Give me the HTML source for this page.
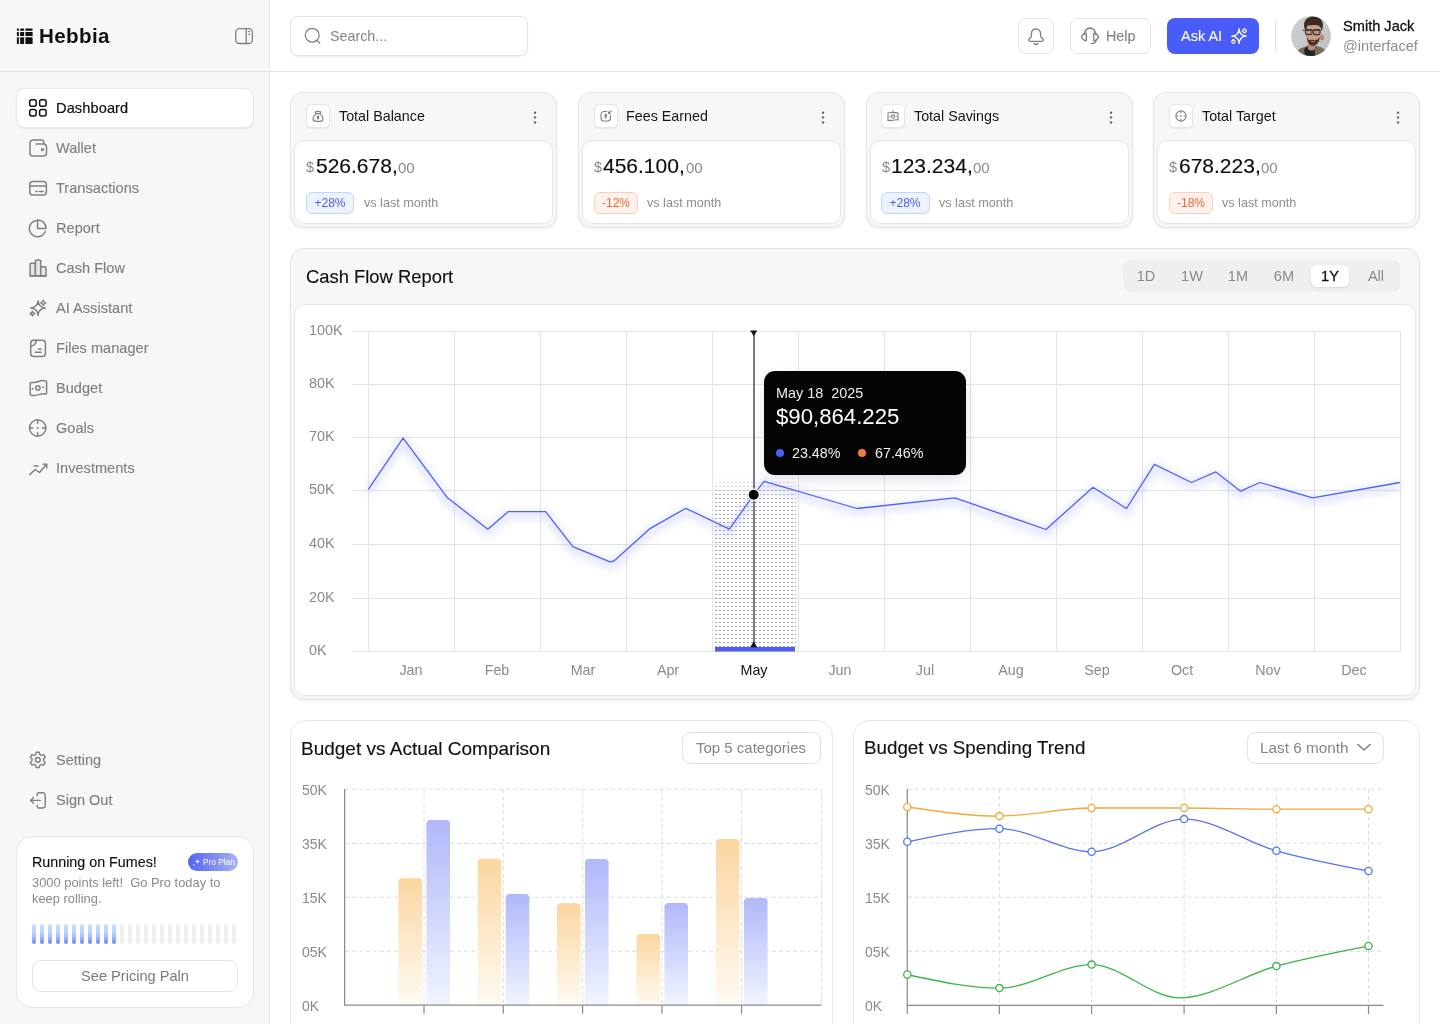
<!DOCTYPE html>
<html><head><meta charset="utf-8"><title>Hebbia Dashboard</title>
<style>
*{margin:0;padding:0;box-sizing:border-box}
html,body{width:1440px;height:1024px;overflow:hidden;background:#fff;font-family:"Liberation Sans",sans-serif}
.t{position:absolute;white-space:pre;will-change:transform}
.b{position:absolute}
svg{position:absolute;overflow:visible}
</style></head>
<body>
<div class="b" style="left:0px;top:0px;width:270px;height:1024px;background:#f7f7f7;border-right:1px solid #e8e8e8;"></div>
<div class="b" style="left:0px;top:71px;width:1440px;height:1px;background:#e6e6e6;"></div>
<svg style="left:0;top:0" width="40" height="50" viewBox="0 0 40 50" fill="#111"><rect x="16.9" y="28.6" width="2.0" height="2.2" rx="0.5"/><rect x="16.9" y="32.1" width="2.0" height="3.8" rx="0.5"/><rect x="16.9" y="37.2" width="2.0" height="6.8" rx="0.5"/><rect x="20.1" y="28.6" width="4.0" height="2.2" rx="0.5"/><rect x="20.1" y="32.1" width="4.0" height="3.8" rx="0.5"/><rect x="20.1" y="37.2" width="4.0" height="6.8" rx="0.5"/><rect x="25.4" y="28.6" width="7.2" height="2.2" rx="0.5"/><rect x="25.4" y="32.1" width="7.2" height="3.8" rx="0.5"/><rect x="25.4" y="37.2" width="7.2" height="6.8" rx="0.5"/></svg>
<div class="t" style="top:26.00px;font-size:20.6px;line-height:20.6px;color:#111;font-weight:700;left:39.00px;letter-spacing:0.35px;">Hebbia</div>
<svg style="left:234px;top:27px" width="20" height="20" viewBox="0 0 20 20" fill="none" stroke="#7f8185" stroke-width="1.3" stroke-linecap="round" stroke-linejoin="round"><rect x="1.7" y="1.6" width="16.7" height="14.9" rx="3.6"/><path d="M12.2 1.6V16.5"/><path d="M14.8 4.5h0.9M14.8 7.4h0.9"/></svg>
<div class="b" style="left:16px;top:88px;width:238px;height:40px;background:#fff;border:1px solid #e9e9ec;border-radius:9px;box-shadow:0 1px 2px rgba(80,90,200,0.10);"></div>
<svg style="left:29px;top:99px" width="18" height="18" viewBox="0 0 18 18" fill="none" stroke="#111" stroke-width="1.5" stroke-linecap="round" stroke-linejoin="round"><rect x="0.7" y="0.7" width="6.5" height="6.5" rx="2"/><rect x="10.6" y="0.7" width="6.5" height="6.5" rx="2"/><rect x="0.7" y="10.6" width="6.5" height="6.5" rx="2"/><rect x="10.6" y="10.6" width="6.5" height="6.5" rx="2"/></svg>
<div class="t" style="top:101.10px;font-size:14.6px;line-height:14.6px;color:#111;font-weight:400;left:55.80px;letter-spacing:0.1px;-webkit-text-stroke:0.2px #111;">Dashboard</div>
<svg style="left:29px;top:139px" width="18" height="18" viewBox="0 0 18 18" fill="none" stroke="#7f8185" stroke-width="1.5" stroke-linecap="round" stroke-linejoin="round"><path d="M7 5H14.5A3 3 0 0 1 17.5 8V14A3 3 0 0 1 14.5 17H4A3 3 0 0 1 1 14V4A3 3 0 0 1 4 1H12.5A2.5 2.5 0 0 1 15 3.5V5"/><circle cx="13.5" cy="10.6" r="0.9"/></svg>
<div class="t" style="top:140.85px;font-size:14.5px;line-height:14.5px;color:#7e8085;font-weight:400;left:55.80px;letter-spacing:0.05px;-webkit-text-stroke:0.15px #7e8085;">Wallet</div>
<svg style="left:29px;top:179px" width="18" height="18" viewBox="0 0 18 18" fill="none" stroke="#7f8185" stroke-width="1.5" stroke-linecap="round" stroke-linejoin="round"><rect x="0.8" y="2.6" width="16.6" height="13.4" rx="3"/><path d="M0.8 7H17.4"/><path d="M6.8 12.6H8.3M10.3 12.6H14.2"/></svg>
<div class="t" style="top:180.85px;font-size:14.5px;line-height:14.5px;color:#7e8085;font-weight:400;left:55.80px;letter-spacing:0.05px;-webkit-text-stroke:0.15px #7e8085;">Transactions</div>
<svg style="left:29px;top:219px" width="18" height="18" viewBox="0 0 18 18" fill="none" stroke="#7f8185" stroke-width="1.5" stroke-linecap="round" stroke-linejoin="round"><path d="M16.2 12.4A8.2 8.2 0 1 1 7.8 1.4"/><path d="M17 9.4A8 8 0 0 0 8.6 1.1V9.4Z"/></svg>
<div class="t" style="top:220.85px;font-size:14.5px;line-height:14.5px;color:#7e8085;font-weight:400;left:55.80px;letter-spacing:0.05px;-webkit-text-stroke:0.15px #7e8085;">Report</div>
<svg style="left:29px;top:259px" width="18" height="18" viewBox="0 0 18 18" fill="none" stroke="#7f8185" stroke-width="1.5" stroke-linecap="round" stroke-linejoin="round"><path d="M1.1 17V5.3A1 1 0 0 1 2.1 4.3H6.4V17Z" fill="#e6e6e6"/><path d="M6.4 17V2.1A1 1 0 0 1 7.4 1.1H10.7A1 1 0 0 1 11.7 2.1V17Z" fill="#e6e6e6"/><path d="M11.7 17V7.7H16A1 1 0 0 1 17 8.7V17Z" fill="#e6e6e6"/><path d="M1.1 17H17"/></svg>
<div class="t" style="top:260.85px;font-size:14.5px;line-height:14.5px;color:#7e8085;font-weight:400;left:55.80px;letter-spacing:0.05px;-webkit-text-stroke:0.15px #7e8085;">Cash Flow</div>
<svg style="left:29px;top:299px" width="18" height="18" viewBox="0 0 18 18" fill="none" stroke="#7f8185" stroke-width="1.5" stroke-linecap="round" stroke-linejoin="round"><path d="M9.07 1.77Q9.65 8.49 16.37 9.07Q9.65 9.65 9.07 16.37Q8.49 9.65 1.77 9.07Q8.49 8.49 9.07 1.77Z" fill="none"/><path d="M14.30 1.20Q14.82 3.28 16.90 3.80Q14.82 4.32 14.30 6.40Q13.78 4.32 11.70 3.80Q13.78 3.28 14.30 1.20Z" stroke-width="1.3" fill="none"/><path d="M3.40 12.10Q3.88 14.02 5.80 14.50Q3.88 14.98 3.40 16.90Q2.92 14.98 1.00 14.50Q2.92 14.02 3.40 12.10Z" stroke-width="1.4" fill="none"/></svg>
<div class="t" style="top:300.85px;font-size:14.5px;line-height:14.5px;color:#7e8085;font-weight:400;left:55.80px;letter-spacing:0.05px;-webkit-text-stroke:0.15px #7e8085;">AI Assistant</div>
<svg style="left:29px;top:339px" width="18" height="18" viewBox="0 0 18 18" fill="none" stroke="#7f8185" stroke-width="1.5" stroke-linecap="round" stroke-linejoin="round"><path d="M7.6 1.2H13.4A3 3 0 0 1 16.4 4.2V14.6A3 3 0 0 1 13.4 17.6H4.7A3 3 0 0 1 1.7 14.6V7.2C4.5 7 6.9 4.6 7.6 1.2Z"/><path d="M1.7 7.2V4.2A3 3 0 0 1 4.7 1.2H7.6"/><path d="M9.3 10.1H12.1M6.1 13.3H12.1"/></svg>
<div class="t" style="top:340.85px;font-size:14.5px;line-height:14.5px;color:#7e8085;font-weight:400;left:55.80px;letter-spacing:0.05px;-webkit-text-stroke:0.15px #7e8085;">Files manager</div>
<svg style="left:29px;top:379px" width="18" height="18" viewBox="0 0 18 18" fill="none" stroke="#7f8185" stroke-width="1.5" stroke-linecap="round" stroke-linejoin="round"><path d="M1.2 4.6C1.2 3.7 1.9 3.3 2.8 3.5C6.5 4.3 9.5 1.8 14 1.6C16.2 1.5 17.6 2.1 17.6 3.3V14C17.6 14.9 16.9 15.3 16 15C12.2 14 9 16.4 4.6 16.6C2.4 16.7 1.2 16.1 1.2 15.1Z"/><circle cx="8.9" cy="8.9" r="2.1"/><path d="M3.6 9.8h0.1M14.2 8.3h0.1" stroke-width="1.9"/></svg>
<div class="t" style="top:380.85px;font-size:14.5px;line-height:14.5px;color:#7e8085;font-weight:400;left:55.80px;letter-spacing:0.05px;-webkit-text-stroke:0.15px #7e8085;">Budget</div>
<svg style="left:29px;top:419px" width="18" height="18" viewBox="0 0 18 18" fill="none" stroke="#7f8185" stroke-width="1.5" stroke-linecap="round" stroke-linejoin="round"><circle cx="8.7" cy="9" r="8.2"/><path d="M8.7 1V4.2M8.7 13.8V17M0.7 9H3.9M13.5 9H16.7"/><path d="M8.7 9h0.05" stroke-width="1.8"/></svg>
<div class="t" style="top:420.85px;font-size:14.5px;line-height:14.5px;color:#7e8085;font-weight:400;left:55.80px;letter-spacing:0.05px;-webkit-text-stroke:0.15px #7e8085;">Goals</div>
<svg style="left:29px;top:459px" width="18" height="18" viewBox="0 0 18 18" fill="none" stroke="#7f8185" stroke-width="1.5" stroke-linecap="round" stroke-linejoin="round"><path d="M0.8 15.6L6.1 10.5L10.4 13.5L17.6 5.3"/><path d="M14.1 5.2H17.7V8.9"/><path d="M5.2 7H9"/></svg>
<div class="t" style="top:460.85px;font-size:14.5px;line-height:14.5px;color:#7e8085;font-weight:400;left:55.80px;letter-spacing:0.05px;-webkit-text-stroke:0.15px #7e8085;">Investments</div>
<svg style="left:29px;top:751px" width="18" height="18" viewBox="0 0 18 18" fill="none" stroke="#7f8185" stroke-width="1.4" stroke-linecap="round" stroke-linejoin="round"><path d="M7.3 1.2H10.3L10.8 3.4L12.6 4.4L14.8 3.7L16.3 6.3L14.6 7.8V9.8L16.3 11.4L14.8 14L12.6 13.3L10.8 14.3L10.3 16.5H7.3L6.8 14.3L5 13.3L2.8 14L1.3 11.4L3 9.8V7.8L1.3 6.3L2.8 3.7L5 4.4L6.8 3.4Z"/><circle cx="8.8" cy="8.85" r="2.4"/></svg>
<div class="t" style="top:752.75px;font-size:14.5px;line-height:14.5px;color:#7e8085;font-weight:400;left:55.80px;-webkit-text-stroke:0.15px #7e8085;">Setting</div>
<svg style="left:29px;top:791.5px" width="18" height="18" viewBox="0 0 18 18" fill="none" stroke="#7f8185" stroke-width="1.4" stroke-linecap="round" stroke-linejoin="round"><path d="M8.2 3.7V2.4A1.6 1.6 0 0 1 9.8 0.8H13.9A2.3 2.3 0 0 1 16.2 3.1V13.7A2.3 2.3 0 0 1 13.9 16H9.8A1.6 1.6 0 0 1 8.2 14.4V13.1"/><path d="M11.3 8.4H1.6M4.5 5.5L1.6 8.4L4.5 11.3"/></svg>
<div class="t" style="top:792.55px;font-size:14.5px;line-height:14.5px;color:#7e8085;font-weight:400;left:55.80px;-webkit-text-stroke:0.15px #7e8085;">Sign Out</div>
<div class="b" style="left:16px;top:836px;width:238px;height:172px;background:#fff;border:1px solid #e6e6e6;border-radius:16px;"></div>
<div class="t" style="top:854.95px;font-size:14.3px;line-height:14.3px;color:#111;font-weight:400;left:32.30px;-webkit-text-stroke:0.15px #111;">Running on Fumes!</div>
<div class="b" style="left:188px;top:853px;width:50px;height:18px;border-radius:9px;background:linear-gradient(90deg,#5363f4,#a9b3f8);"></div>
<svg style="left:192px;top:857px" width="10" height="10" viewBox="0 0 10 10" fill="#fff"><path d="M5.5 1.5C5.5 3.6 6.4 4.5 8.4 4.5C6.4 4.5 5.5 5.4 5.5 7.5C5.5 5.4 4.6 4.5 2.6 4.5C4.6 4.5 5.5 3.6 5.5 1.5Z"/><circle cx="1.8" cy="7.9" r="0.7"/></svg>
<div class="t" style="top:858.05px;font-size:8.3px;line-height:8.3px;color:#fff;font-weight:400;left:202.50px;">Pro Plan</div>
<div class="t" style="top:876.95px;font-size:12.9px;line-height:12.9px;color:#8a8a8a;font-weight:400;left:32.30px;">3000 points left!  Go Pro today to</div>
<div class="t" style="top:892.95px;font-size:12.9px;line-height:12.9px;color:#8a8a8a;font-weight:400;left:32.30px;">keep rolling.</div>
<div class="b" style="left:32px;top:924px;width:4px;height:20px;background:linear-gradient(180deg,#c9dcff 0%,#bcd1fe 45%,#91a6fa 80%,#7489f8 100%);border-radius:2px;"></div>
<div class="b" style="left:40px;top:924px;width:4px;height:20px;background:linear-gradient(180deg,#c9dcff 0%,#bcd1fe 45%,#91a6fa 80%,#7489f8 100%);border-radius:2px;"></div>
<div class="b" style="left:48px;top:924px;width:4px;height:20px;background:linear-gradient(180deg,#c9dcff 0%,#bcd1fe 45%,#91a6fa 80%,#7489f8 100%);border-radius:2px;"></div>
<div class="b" style="left:56px;top:924px;width:4px;height:20px;background:linear-gradient(180deg,#c9dcff 0%,#bcd1fe 45%,#91a6fa 80%,#7489f8 100%);border-radius:2px;"></div>
<div class="b" style="left:64px;top:924px;width:4px;height:20px;background:linear-gradient(180deg,#c9dcff 0%,#bcd1fe 45%,#91a6fa 80%,#7489f8 100%);border-radius:2px;"></div>
<div class="b" style="left:72px;top:924px;width:4px;height:20px;background:linear-gradient(180deg,#c9dcff 0%,#bcd1fe 45%,#91a6fa 80%,#7489f8 100%);border-radius:2px;"></div>
<div class="b" style="left:80px;top:924px;width:4px;height:20px;background:linear-gradient(180deg,#c9dcff 0%,#bcd1fe 45%,#91a6fa 80%,#7489f8 100%);border-radius:2px;"></div>
<div class="b" style="left:88px;top:924px;width:4px;height:20px;background:linear-gradient(180deg,#c9dcff 0%,#bcd1fe 45%,#91a6fa 80%,#7489f8 100%);border-radius:2px;"></div>
<div class="b" style="left:96px;top:924px;width:4px;height:20px;background:linear-gradient(180deg,#c9dcff 0%,#bcd1fe 45%,#91a6fa 80%,#7489f8 100%);border-radius:2px;"></div>
<div class="b" style="left:104px;top:924px;width:4px;height:20px;background:linear-gradient(180deg,#c9dcff 0%,#bcd1fe 45%,#91a6fa 80%,#7489f8 100%);border-radius:2px;"></div>
<div class="b" style="left:112px;top:924px;width:4px;height:20px;background:linear-gradient(180deg,#c9dcff 0%,#bcd1fe 45%,#91a6fa 80%,#7489f8 100%);border-radius:2px;"></div>
<div class="b" style="left:120px;top:924px;width:4px;height:20px;background:#efefef;border-radius:2px;"></div>
<div class="b" style="left:128px;top:924px;width:4px;height:20px;background:#efefef;border-radius:2px;"></div>
<div class="b" style="left:136px;top:924px;width:4px;height:20px;background:#efefef;border-radius:2px;"></div>
<div class="b" style="left:144px;top:924px;width:4px;height:20px;background:#efefef;border-radius:2px;"></div>
<div class="b" style="left:152px;top:924px;width:4px;height:20px;background:#efefef;border-radius:2px;"></div>
<div class="b" style="left:160px;top:924px;width:4px;height:20px;background:#efefef;border-radius:2px;"></div>
<div class="b" style="left:168px;top:924px;width:4px;height:20px;background:#efefef;border-radius:2px;"></div>
<div class="b" style="left:176px;top:924px;width:4px;height:20px;background:#efefef;border-radius:2px;"></div>
<div class="b" style="left:184px;top:924px;width:4px;height:20px;background:#efefef;border-radius:2px;"></div>
<div class="b" style="left:192px;top:924px;width:4px;height:20px;background:#efefef;border-radius:2px;"></div>
<div class="b" style="left:200px;top:924px;width:4px;height:20px;background:#efefef;border-radius:2px;"></div>
<div class="b" style="left:208px;top:924px;width:4px;height:20px;background:#efefef;border-radius:2px;"></div>
<div class="b" style="left:216px;top:924px;width:4px;height:20px;background:#efefef;border-radius:2px;"></div>
<div class="b" style="left:224px;top:924px;width:4px;height:20px;background:#efefef;border-radius:2px;"></div>
<div class="b" style="left:232px;top:924px;width:4px;height:20px;background:#efefef;border-radius:2px;"></div>
<div class="b" style="left:32px;top:960px;width:206px;height:32px;border:1px solid #e2e2e2;border-radius:9px;background:#fff;"></div>
<div class="t" style="top:968.90px;font-size:14.6px;line-height:14.6px;color:#7a7a7a;font-weight:400;left:-165.50px;width:600px;text-align:center;">See Pricing Paln</div>
<div class="b" style="left:290px;top:16px;width:238px;height:40px;border:1px solid #e3e3e3;border-radius:8px;background:#fff;box-shadow:0 1px 2px rgba(80,90,200,0.10);"></div>
<svg style="left:304px;top:27px" width="18" height="18" viewBox="0 0 18 18" fill="none" stroke="#7f8185" stroke-width="1.3" stroke-linecap="round" stroke-linejoin="round"><circle cx="8.2" cy="8.2" r="6.9"/><path d="M13.2 13.5L15.7 16"/></svg>
<div class="t" style="top:29.45px;font-size:14.3px;line-height:14.3px;color:#858585;font-weight:400;left:330.30px;">Search...</div>
<div class="b" style="left:1018px;top:18px;width:36px;height:36px;border:1px solid #e3e3e3;border-radius:8px;background:#fff;"></div>
<svg style="left:1027px;top:27px" width="18" height="18" viewBox="0 0 18 18" fill="none" stroke="#7f8185" stroke-width="1.35" stroke-linecap="round" stroke-linejoin="round"><path d="M9 2C5.9 2 4.4 4.3 4.4 7V8.8C4.4 9.9 3.7 10.7 2.4 11.6C1 12.6 1.6 14.4 3.4 14.4H14.6C16.4 14.4 17 12.6 15.6 11.6C14.3 10.7 13.6 9.9 13.6 8.8V7C13.6 4.3 12.1 2 9 2Z"/><path d="M7 16.6C8 17.4 10 17.4 11 16.6"/></svg>
<div class="b" style="left:1070px;top:18px;width:81px;height:36px;border:1px solid #e3e3e3;border-radius:8px;background:#fff;"></div>
<svg style="left:1081px;top:27px" width="18" height="18" viewBox="0 0 18 18" fill="none" stroke="#7f8185" stroke-width="1.35" stroke-linecap="round" stroke-linejoin="round"><path d="M3.4 7.6C3.4 3.6 6 1 9 1C12 1 14.6 3.6 14.6 7.6"/><path d="M5.3 6.8V13.2C5.3 13.9 4.7 14.2 4.1 13.8C2.3 12.6 0.6 11.3 0.6 9.9C0.6 8.6 2.2 7.3 4 6.2C4.6 5.8 5.3 6 5.3 6.8Z"/><path d="M12.7 6.8V13.2C12.7 13.9 13.3 14.2 13.9 13.8C15.7 12.6 17.4 11.3 17.4 9.9C17.4 8.6 15.8 7.3 14 6.2C13.4 5.8 12.7 6 12.7 6.8Z"/><path d="M15.2 13.2C15 15.3 13.6 16.6 10.2 16.6"/></svg>
<div class="t" style="top:28.85px;font-size:14.3px;line-height:14.3px;color:#7e8085;font-weight:400;left:1105.60px;-webkit-text-stroke:0.1px #7e8085;">Help</div>
<div class="b" style="left:1167px;top:18px;width:92px;height:36px;background:#4a5cf7;border-radius:8px;"></div>
<div class="t" style="top:28.75px;font-size:14.5px;line-height:14.5px;color:#fff;font-weight:400;left:1181.00px;-webkit-text-stroke:0.1px #fff;">Ask AI</div>
<svg style="left:1229px;top:27px" width="18" height="18" viewBox="0 0 18 18" fill="none" stroke="#fff" stroke-width="1.3" stroke-linecap="round" stroke-linejoin="round"><path d="M10.1 1.7C10.1 5.4 12.4 9.2 17.3 9.2C12.4 9.2 10.1 13 10.1 16.5C10.1 13 7.8 9.2 2.7 9.2C7.8 9.2 10.1 5.4 10.1 1.7Z"/><path d="M15.4 1.6L17.5 3.8L15.4 6L13.3 3.8Z" stroke-width="1.1"/><path d="M4.4 12.3L6.4 14.5L4.4 16.7L2.4 14.5Z" stroke-width="1.1"/></svg>
<div class="b" style="left:1275px;top:20px;width:1px;height:32px;background:#e3e3e3;"></div>
<svg style="left:1291px;top:16px" width="40" height="40" viewBox="0 0 40 40">
<defs><clipPath id="avc"><circle cx="20" cy="20" r="19.9"/></clipPath>
<linearGradient id="avbg" x1="0" y1="0" x2="1" y2="1"><stop offset="0" stop-color="#cdcfcb"/><stop offset="1" stop-color="#bcc2c3"/></linearGradient>
<filter id="avb" x="-10%" y="-10%" width="120%" height="120%"><feGaussianBlur stdDeviation="0.45"/></filter></defs>
<g clip-path="url(#avc)"><rect width="40" height="40" fill="url(#avbg)"/>
<g filter="url(#avb)">
<path d="M5 40C6 35 8 32.5 12 31.5L17 29.5H24L29 31C33 32 36 35 37 40Z" fill="#7b6a58"/>
<path d="M13 33L17 30.5L20 34L23.5 31L24 40H14Z" fill="#1f2529"/>
<path d="M17 27H24V33C22 35 19 35 17 33Z" fill="#b98a70"/>
<path d="M15 13C14.6 21 15.6 28 21.5 29.6C27.5 28.5 29.8 22.5 29.6 13C29.3 7.5 26 6 22 6C18 6 15.3 8 15 13Z" fill="#cf9d83"/>
<ellipse cx="31" cy="21.5" rx="2" ry="3" fill="#b9876d"/>
<path d="M15.8 20C16 26 18 29.5 21.8 29.8C26 29.4 28.6 26 28.8 21C27.5 23.4 25.5 24 23.5 24.2C22 23.6 20 23.6 18.5 24.2C17 23.8 16.4 22 15.8 20Z" fill="#4a3329"/>
<path d="M19.5 25.6C21 25 23 25 24.5 25.6C23 26.6 21 26.6 19.5 25.6Z" fill="#c98c7c"/>
<path d="M13.8 13C12 8 13.5 3 18 1.5C20 0.2 24 0 27 1.5C31 3.5 32.5 7 31.8 10.5L30.8 15.5C30.2 11.5 28.8 9.6 26.2 9.2C23 8.8 19 9.6 16.5 9.6C16 10.6 15.8 12 15.6 14.2Z" fill="#3b2c24"/>
</g>
<path d="M11.5 14.2H29.5" stroke="#2e3236" stroke-width="1"/>
<rect x="14.4" y="13.6" width="6.6" height="5" rx="1.4" fill="rgba(120,110,100,0.25)" stroke="#33373b" stroke-width="1.1"/>
<rect x="22.4" y="13.6" width="6.6" height="5" rx="1.4" fill="rgba(120,110,100,0.25)" stroke="#33373b" stroke-width="1.1"/>
</g></svg>
<div class="t" style="top:18.50px;font-size:14.6px;line-height:14.6px;color:#111;font-weight:400;left:1343.20px;-webkit-text-stroke:0.3px #111;">Smith Jack</div>
<div class="t" style="top:38.80px;font-size:14.6px;line-height:14.6px;color:#8d8d8d;font-weight:400;left:1342.80px;">@interfacef</div>
<div class="b" style="left:290px;top:92px;width:267px;height:136px;background:#f7f7f7;border:1px solid #e5e5e8;border-radius:13px;box-shadow:0 1px 2px rgba(90,110,230,0.12);"></div>
<div class="b" style="left:306.0px;top:104px;width:24px;height:24px;background:#fff;border:1px solid #e6e6e6;border-radius:5px;box-shadow:0 1px 1px rgba(90,110,230,0.10);"></div>
<svg style="left:312.0px;top:110px" width="12" height="12" viewBox="0 0 12 12" fill="none" stroke="#7f8185" stroke-width="1.1" stroke-linecap="round" stroke-linejoin="round"><path d="M4 1.3C4.6 2 5.2 2 6 1.2C6.8 2 7.4 2 8 1.3L8.8 2.2C8.5 2.8 8.3 3.2 8 3.6H4C3.7 3.2 3.5 2.8 3.2 2.2Z"/><path d="M4 3.6C2.3 5 1 7.4 1 9.1C1 10.6 2.2 11.4 4 11.4H8C9.8 11.4 11 10.6 11 9.1C11 7.4 9.7 5 8 3.6"/><path d="M6 5.8V9M5.2 6.6C5.2 6 6.8 6 6.8 6.7C6.8 7.4 5.2 7.2 5.2 8C5.2 8.7 6.8 8.7 6.8 8.1"/></svg>
<div class="t" style="top:108.85px;font-size:14.3px;line-height:14.3px;color:#161616;font-weight:400;left:338.50px;">Total Balance</div>
<svg style="left:533.4px;top:110px" width="4" height="16" viewBox="0 0 4 16" fill="#6f6f6f"><circle cx="2" cy="2.7" r="1.25"/><circle cx="2" cy="7.6" r="1.25"/><circle cx="2" cy="12.5" r="1.25"/></svg>
<div class="b" style="left:294px;top:140px;width:259px;height:84px;background:#fff;border:1px solid #e6e6e6;border-radius:10px;"></div>
<div class="t" style="top:160.25px;font-size:14.5px;line-height:14.5px;color:#8a8a8a;font-weight:400;left:306.30px;">$</div>
<div class="t" style="top:154.50px;font-size:21px;line-height:21px;color:#0d0d0d;font-weight:400;left:315.50px;-webkit-text-stroke:0.15px #0d0d0d;">526.678,</div>
<div class="t" style="top:159.60px;font-size:15px;line-height:15px;color:#8d8d8d;font-weight:400;left:398.00px;">00</div>
<div class="b" style="left:306.0px;top:192px;width:48.3px;height:22px;background:#edf2ff;border:1px solid #c6d4fb;color:#4a5cf7;border-radius:6px;"></div>
<div class="t" style="top:197.20px;font-size:12px;line-height:12px;color:#4a5cf7;font-weight:400;left:30.15px;width:600px;text-align:center;">+28%</div>
<div class="t" style="top:196.90px;font-size:12.6px;line-height:12.6px;color:#8d8d8d;font-weight:400;left:363.50px;">vs last month</div>
<div class="b" style="left:578px;top:92px;width:267px;height:136px;background:#f7f7f7;border:1px solid #e5e5e8;border-radius:13px;box-shadow:0 1px 2px rgba(90,110,230,0.12);"></div>
<div class="b" style="left:593.6700000000001px;top:104px;width:24px;height:24px;background:#fff;border:1px solid #e6e6e6;border-radius:5px;box-shadow:0 1px 1px rgba(90,110,230,0.10);"></div>
<svg style="left:599.6700000000001px;top:110px" width="12" height="12" viewBox="0 0 12 12" fill="none" stroke="#7f8185" stroke-width="1.1" stroke-linecap="round" stroke-linejoin="round"><path d="M6.8 1.5H4A3 3 0 0 0 1 4.5V8A3 3 0 0 0 4 11H7.5A3 3 0 0 0 10.5 8V5.4"/><path d="M11 1L8.6 3.4M8.6 1.8V3.4H10.2"/><path d="M5.8 4V8.3M4.9 5C4.9 4.4 6.7 4.4 6.7 5.1C6.7 5.8 4.9 5.8 4.9 6.6C4.9 7.3 6.7 7.3 6.7 6.8"/></svg>
<div class="t" style="top:108.85px;font-size:14.3px;line-height:14.3px;color:#161616;font-weight:400;left:626.17px;">Fees Earned</div>
<svg style="left:821.07px;top:110px" width="4" height="16" viewBox="0 0 4 16" fill="#6f6f6f"><circle cx="2" cy="2.7" r="1.25"/><circle cx="2" cy="7.6" r="1.25"/><circle cx="2" cy="12.5" r="1.25"/></svg>
<div class="b" style="left:582px;top:140px;width:259px;height:84px;background:#fff;border:1px solid #e6e6e6;border-radius:10px;"></div>
<div class="t" style="top:160.25px;font-size:14.5px;line-height:14.5px;color:#8a8a8a;font-weight:400;left:593.97px;">$</div>
<div class="t" style="top:154.50px;font-size:21px;line-height:21px;color:#0d0d0d;font-weight:400;left:603.17px;-webkit-text-stroke:0.15px #0d0d0d;">456.100,</div>
<div class="t" style="top:159.60px;font-size:15px;line-height:15px;color:#8d8d8d;font-weight:400;left:685.67px;">00</div>
<div class="b" style="left:593.6700000000001px;top:192px;width:44px;height:22px;background:#fff1eb;border:1px solid #fbcfbd;color:#f36c3a;border-radius:6px;"></div>
<div class="t" style="top:197.20px;font-size:12px;line-height:12px;color:#f06a38;font-weight:400;left:315.67px;width:600px;text-align:center;">-12%</div>
<div class="t" style="top:196.90px;font-size:12.6px;line-height:12.6px;color:#8d8d8d;font-weight:400;left:646.87px;">vs last month</div>
<div class="b" style="left:866px;top:92px;width:267px;height:136px;background:#f7f7f7;border:1px solid #e5e5e8;border-radius:13px;box-shadow:0 1px 2px rgba(90,110,230,0.12);"></div>
<div class="b" style="left:881.34px;top:104px;width:24px;height:24px;background:#fff;border:1px solid #e6e6e6;border-radius:5px;box-shadow:0 1px 1px rgba(90,110,230,0.10);"></div>
<svg style="left:887.34px;top:110px" width="12" height="12" viewBox="0 0 12 12" fill="none" stroke="#7f8185" stroke-width="1.1" stroke-linecap="round" stroke-linejoin="round"><path d="M1 3C3.5 2 5 3 6 2.2C7.5 3.2 9 2 11 3V10C9 9.2 7 10.6 4 10.4C2.6 10.3 1.6 10.6 1 10.8Z"/><circle cx="6" cy="6.5" r="1.6"/><path d="M6 0.8V2.4M2.8 6.6h0.1M9.2 6.4h0.1"/></svg>
<div class="t" style="top:108.85px;font-size:14.3px;line-height:14.3px;color:#161616;font-weight:400;left:913.84px;">Total Savings</div>
<svg style="left:1108.74px;top:110px" width="4" height="16" viewBox="0 0 4 16" fill="#6f6f6f"><circle cx="2" cy="2.7" r="1.25"/><circle cx="2" cy="7.6" r="1.25"/><circle cx="2" cy="12.5" r="1.25"/></svg>
<div class="b" style="left:870px;top:140px;width:259px;height:84px;background:#fff;border:1px solid #e6e6e6;border-radius:10px;"></div>
<div class="t" style="top:160.25px;font-size:14.5px;line-height:14.5px;color:#8a8a8a;font-weight:400;left:881.64px;">$</div>
<div class="t" style="top:154.50px;font-size:21px;line-height:21px;color:#0d0d0d;font-weight:400;left:890.84px;-webkit-text-stroke:0.15px #0d0d0d;">123.234,</div>
<div class="t" style="top:159.60px;font-size:15px;line-height:15px;color:#8d8d8d;font-weight:400;left:973.34px;">00</div>
<div class="b" style="left:881.34px;top:192px;width:48.3px;height:22px;background:#edf2ff;border:1px solid #c6d4fb;color:#4a5cf7;border-radius:6px;"></div>
<div class="t" style="top:197.20px;font-size:12px;line-height:12px;color:#4a5cf7;font-weight:400;left:605.49px;width:600px;text-align:center;">+28%</div>
<div class="t" style="top:196.90px;font-size:12.6px;line-height:12.6px;color:#8d8d8d;font-weight:400;left:938.84px;">vs last month</div>
<div class="b" style="left:1153px;top:92px;width:267px;height:136px;background:#f7f7f7;border:1px solid #e5e5e8;border-radius:13px;box-shadow:0 1px 2px rgba(90,110,230,0.12);"></div>
<div class="b" style="left:1169.01px;top:104px;width:24px;height:24px;background:#fff;border:1px solid #e6e6e6;border-radius:5px;box-shadow:0 1px 1px rgba(90,110,230,0.10);"></div>
<svg style="left:1175.01px;top:110px" width="12" height="12" viewBox="0 0 12 12" fill="none" stroke="#7f8185" stroke-width="1.1" stroke-linecap="round" stroke-linejoin="round"><circle cx="6" cy="6" r="5.1"/><path d="M6 1V3M6 9V11M1 6H3M9 6H11M6 5.4V6.6"/></svg>
<div class="t" style="top:108.85px;font-size:14.3px;line-height:14.3px;color:#161616;font-weight:400;left:1201.51px;">Total Target</div>
<svg style="left:1396.41px;top:110px" width="4" height="16" viewBox="0 0 4 16" fill="#6f6f6f"><circle cx="2" cy="2.7" r="1.25"/><circle cx="2" cy="7.6" r="1.25"/><circle cx="2" cy="12.5" r="1.25"/></svg>
<div class="b" style="left:1157px;top:140px;width:259px;height:84px;background:#fff;border:1px solid #e6e6e6;border-radius:10px;"></div>
<div class="t" style="top:160.25px;font-size:14.5px;line-height:14.5px;color:#8a8a8a;font-weight:400;left:1169.31px;">$</div>
<div class="t" style="top:154.50px;font-size:21px;line-height:21px;color:#0d0d0d;font-weight:400;left:1178.51px;-webkit-text-stroke:0.15px #0d0d0d;">678.223,</div>
<div class="t" style="top:159.60px;font-size:15px;line-height:15px;color:#8d8d8d;font-weight:400;left:1261.01px;">00</div>
<div class="b" style="left:1169.01px;top:192px;width:44px;height:22px;background:#fff1eb;border:1px solid #fbcfbd;color:#f36c3a;border-radius:6px;"></div>
<div class="t" style="top:197.20px;font-size:12px;line-height:12px;color:#f06a38;font-weight:400;left:891.01px;width:600px;text-align:center;">-18%</div>
<div class="t" style="top:196.90px;font-size:12.6px;line-height:12.6px;color:#8d8d8d;font-weight:400;left:1222.21px;">vs last month</div>
<div class="b" style="left:290px;top:248px;width:1130px;height:452px;background:#f7f7f7;border:1px solid #e5e5e8;border-radius:14px;box-shadow:0 1px 2px rgba(90,110,230,0.12);"></div>
<div class="t" style="top:267.70px;font-size:18.4px;line-height:18.4px;color:#111;font-weight:400;left:305.60px;-webkit-text-stroke:0.15px #111;">Cash Flow Report</div>
<div class="b" style="left:1122.5px;top:260px;width:277px;height:31.5px;background:#efefef;border-radius:8px;"></div>
<div class="b" style="left:1311px;top:265px;width:38px;height:22px;background:#fff;border-radius:6px;box-shadow:0 1px 2px rgba(80,90,200,0.18);"></div>
<div class="t" style="top:269.00px;font-size:14.6px;line-height:14.6px;color:#8a8a8a;font-weight:400;left:846.00px;width:600px;text-align:center;">1D</div>
<div class="t" style="top:269.00px;font-size:14.6px;line-height:14.6px;color:#8a8a8a;font-weight:400;left:892.00px;width:600px;text-align:center;">1W</div>
<div class="t" style="top:269.00px;font-size:14.6px;line-height:14.6px;color:#8a8a8a;font-weight:400;left:937.70px;width:600px;text-align:center;">1M</div>
<div class="t" style="top:269.00px;font-size:14.6px;line-height:14.6px;color:#8a8a8a;font-weight:400;left:984.20px;width:600px;text-align:center;">6M</div>
<div class="t" style="top:269.00px;font-size:14.6px;line-height:14.6px;color:#111;font-weight:400;left:1029.50px;width:600px;text-align:center;-webkit-text-stroke:0.3px #111;">1Y</div>
<div class="t" style="top:269.00px;font-size:14.6px;line-height:14.6px;color:#8a8a8a;font-weight:400;left:1075.80px;width:600px;text-align:center;">All</div>
<div class="b" style="left:294px;top:303.5px;width:1122px;height:392px;background:#fff;border:1px solid #e6e6e6;border-radius:10px;"></div>
<svg style="left:0;top:0" width="1440" height="1024" viewBox="0 0 1440 1024">
<defs><pattern id="dots" x="2" y="0" width="4" height="4" patternUnits="userSpaceOnUse"><rect x="1" y="2" width="2" height="1" fill="#a3a3a3"/></pattern><linearGradient id="fadeg" x1="0" y1="0" x2="0" y2="1"><stop offset="0" stop-color="#fff" stop-opacity="0"/><stop offset="0.12" stop-color="#fff" stop-opacity="1"/><stop offset="1" stop-color="#fff"/></linearGradient><mask id="fadem"><rect x="700" y="476" width="110" height="175" fill="url(#fadeg)"/></mask><filter id="glow" x="-10%" y="-50%" width="120%" height="200%"><feGaussianBlur stdDeviation="4.5"/></filter><filter id="tsh" x="-30%" y="-40%" width="160%" height="180%"><feGaussianBlur stdDeviation="8"/></filter></defs>
<path d="M352 331.50H1400.5" stroke="#e4e4e4" stroke-width="1"/><path d="M352 384.50H1400.5" stroke="#e4e4e4" stroke-width="1"/><path d="M352 437.50H1400.5" stroke="#e4e4e4" stroke-width="1"/><path d="M352 490.50H1400.5" stroke="#e4e4e4" stroke-width="1"/><path d="M352 544.50H1400.5" stroke="#e4e4e4" stroke-width="1"/><path d="M352 598.50H1400.5" stroke="#e4e4e4" stroke-width="1"/><path d="M352 651.50H1400.5" stroke="#e4e4e4" stroke-width="1"/><path d="M368.50 331V651" stroke="#e4e4e4" stroke-width="1"/><path d="M454.50 331V651" stroke="#e4e4e4" stroke-width="1"/><path d="M540.50 331V651" stroke="#e4e4e4" stroke-width="1"/><path d="M626.50 331V651" stroke="#e4e4e4" stroke-width="1"/><path d="M712.50 331V651" stroke="#e4e4e4" stroke-width="1"/><path d="M798.50 331V651" stroke="#e4e4e4" stroke-width="1"/><path d="M884.50 331V651" stroke="#e4e4e4" stroke-width="1"/><path d="M970.50 331V651" stroke="#e4e4e4" stroke-width="1"/><path d="M1056.50 331V651" stroke="#e4e4e4" stroke-width="1"/><path d="M1142.50 331V651" stroke="#e4e4e4" stroke-width="1"/><path d="M1228.50 331V651" stroke="#e4e4e4" stroke-width="1"/><path d="M1314.50 331V651" stroke="#e4e4e4" stroke-width="1"/><path d="M1400.50 331V651" stroke="#e4e4e4" stroke-width="1"/><rect x="714" y="476" width="82" height="171" fill="url(#dots)" mask="url(#fadem)"/><path d="M368.3 489.4 L403.1 438.1 L447.5 497.8 L487.8 529.2 L508.1 511.7 L545.6 511.7 L572.8 546.7 L610.0 561.8 L614.0 561.0 L649.5 528.9 L685.8 508.3 L729.4 529.2 L753.7 494.7 L764.1 481.3 L857.0 508.5 L954.9 497.9 L1046.0 529.5 L1093.0 487.2 L1126.5 508.5 L1154.4 464.3 L1191.5 482.5 L1215.8 471.9 L1240.6 491.2 L1259.9 482.5 L1312.6 497.9 L1400.0 482.5" transform="translate(0 3)" fill="none" stroke="#8c98ff" stroke-width="6" opacity="0.33" filter="url(#glow)"/><path d="M368.3 489.4 L403.1 438.1 L447.5 497.8 L487.8 529.2 L508.1 511.7 L545.6 511.7 L572.8 546.7 L610.0 561.8 L614.0 561.0 L649.5 528.9 L685.8 508.3 L729.4 529.2 L753.7 494.7 L764.1 481.3 L857.0 508.5 L954.9 497.9 L1046.0 529.5 L1093.0 487.2 L1126.5 508.5 L1154.4 464.3 L1191.5 482.5 L1215.8 471.9 L1240.6 491.2 L1259.9 482.5 L1312.6 497.9 L1400.0 482.5" fill="none" stroke="#4f63f5" stroke-width="1.3" stroke-linejoin="round"/><rect x="715" y="647" width="80" height="4.5" fill="#4a5cf7"/><path d="M754 332V647" stroke="#636468" stroke-width="1.7"/><path d="M750.2 330.5H757.2L753.7 336Z" fill="#111"/><path d="M750.2 647.2H757.2L753.7 641.5Z" fill="#111"/><circle cx="753.7" cy="494.7" r="5.6" fill="#000" stroke="#fff" stroke-width="1.2"/><rect x="768" y="378" width="196" height="100" rx="12" fill="#1a1f6a" opacity="0.16" filter="url(#tsh)"/></svg>
<div class="t" style="top:323.20px;font-size:14.4px;line-height:14.4px;color:#8a8a8a;font-weight:400;left:309.30px;">100K</div>
<div class="t" style="top:376.20px;font-size:14.4px;line-height:14.4px;color:#8a8a8a;font-weight:400;left:309.30px;">80K</div>
<div class="t" style="top:429.20px;font-size:14.4px;line-height:14.4px;color:#8a8a8a;font-weight:400;left:309.30px;">70K</div>
<div class="t" style="top:482.20px;font-size:14.4px;line-height:14.4px;color:#8a8a8a;font-weight:400;left:309.30px;">50K</div>
<div class="t" style="top:536.20px;font-size:14.4px;line-height:14.4px;color:#8a8a8a;font-weight:400;left:309.30px;">40K</div>
<div class="t" style="top:590.20px;font-size:14.4px;line-height:14.4px;color:#8a8a8a;font-weight:400;left:309.30px;">20K</div>
<div class="t" style="top:643.20px;font-size:14.4px;line-height:14.4px;color:#8a8a8a;font-weight:400;left:309.30px;">0K</div>
<div class="t" style="top:662.85px;font-size:14.3px;line-height:14.3px;color:#8a8a8a;font-weight:400;left:111.30px;width:600px;text-align:center;">Jan</div>
<div class="t" style="top:662.85px;font-size:14.3px;line-height:14.3px;color:#8a8a8a;font-weight:400;left:196.98px;width:600px;text-align:center;">Feb</div>
<div class="t" style="top:662.85px;font-size:14.3px;line-height:14.3px;color:#8a8a8a;font-weight:400;left:282.66px;width:600px;text-align:center;">Mar</div>
<div class="t" style="top:662.85px;font-size:14.3px;line-height:14.3px;color:#8a8a8a;font-weight:400;left:368.34px;width:600px;text-align:center;">Apr</div>
<div class="t" style="top:662.85px;font-size:14.3px;line-height:14.3px;color:#111;font-weight:400;left:454.02px;width:600px;text-align:center;">May</div>
<div class="t" style="top:662.85px;font-size:14.3px;line-height:14.3px;color:#8a8a8a;font-weight:400;left:539.70px;width:600px;text-align:center;">Jun</div>
<div class="t" style="top:662.85px;font-size:14.3px;line-height:14.3px;color:#8a8a8a;font-weight:400;left:625.38px;width:600px;text-align:center;">Jul</div>
<div class="t" style="top:662.85px;font-size:14.3px;line-height:14.3px;color:#8a8a8a;font-weight:400;left:711.06px;width:600px;text-align:center;">Aug</div>
<div class="t" style="top:662.85px;font-size:14.3px;line-height:14.3px;color:#8a8a8a;font-weight:400;left:796.74px;width:600px;text-align:center;">Sep</div>
<div class="t" style="top:662.85px;font-size:14.3px;line-height:14.3px;color:#8a8a8a;font-weight:400;left:882.42px;width:600px;text-align:center;">Oct</div>
<div class="t" style="top:662.85px;font-size:14.3px;line-height:14.3px;color:#8a8a8a;font-weight:400;left:968.10px;width:600px;text-align:center;">Nov</div>
<div class="t" style="top:662.85px;font-size:14.3px;line-height:14.3px;color:#8a8a8a;font-weight:400;left:1053.78px;width:600px;text-align:center;">Dec</div>
<div class="b" style="left:764px;top:371px;width:202px;height:104px;background:#050505;border-radius:11px;"></div>
<div class="t" style="top:385.70px;font-size:14.4px;line-height:14.4px;color:#ececec;font-weight:400;left:776.40px;">May 18  2025</div>
<div class="t" style="top:405.80px;font-size:22.2px;line-height:22.2px;color:#fff;font-weight:400;left:776.40px;">$90,864.225</div>
<div class="b" style="left:775.8px;top:448.8px;width:8.4px;height:8.4px;background:#4a5cf7;border-radius:50%;"></div>
<div class="t" style="top:445.85px;font-size:14.3px;line-height:14.3px;color:#f0f0f0;font-weight:400;left:792.40px;">23.48%</div>
<div class="b" style="left:857.6px;top:448.8px;width:8.4px;height:8.4px;background:#f47b3e;border-radius:50%;"></div>
<div class="t" style="top:445.85px;font-size:14.3px;line-height:14.3px;color:#f0f0f0;font-weight:400;left:874.50px;">67.46%</div>
<div class="b" style="left:290px;top:720px;width:543px;height:340px;background:#fff;border:1px solid #e6e6e6;border-radius:16px;"></div>
<div class="t" style="top:739.10px;font-size:19.0px;line-height:19.0px;color:#111;font-weight:400;left:301.20px;-webkit-text-stroke:0.15px #111;">Budget vs Actual Comparison</div>
<div class="b" style="left:682px;top:732px;width:139px;height:32px;background:#fff;border:1px solid #e2e2e2;border-radius:8px;"></div>
<div class="t" style="top:740.20px;font-size:15.0px;line-height:15.0px;color:#858585;font-weight:400;left:451.30px;width:600px;text-align:center;">Top 5 categories</div>
<div class="b" style="left:853px;top:720px;width:567px;height:340px;background:#fff;border:1px solid #e6e6e6;border-radius:16px;"></div>
<div class="t" style="top:739.20px;font-size:18.8px;line-height:18.8px;color:#111;font-weight:400;left:864.40px;-webkit-text-stroke:0.15px #111;">Budget vs Spending Trend</div>
<div class="b" style="left:1247px;top:732px;width:137px;height:32px;background:#fff;border:1px solid #e2e2e2;border-radius:8px;"></div>
<div class="t" style="top:740.05px;font-size:15.3px;line-height:15.3px;color:#858585;font-weight:400;left:1260.30px;">Last 6 month</div>
<svg style="left:1356px;top:742px" width="16" height="10" viewBox="0 0 16 10" fill="none" stroke="#7a7a7a" stroke-width="1.4" stroke-linecap="round" stroke-linejoin="round"><path d="M2 2.5L8 8L14 2.5"/></svg>
<div class="t" style="top:782.70px;font-size:14.0px;line-height:14.0px;color:#8a8a8a;font-weight:400;left:301.80px;">50K</div>
<div class="t" style="top:782.70px;font-size:14.0px;line-height:14.0px;color:#8a8a8a;font-weight:400;left:865.00px;">50K</div>
<div class="t" style="top:836.80px;font-size:14.0px;line-height:14.0px;color:#8a8a8a;font-weight:400;left:301.80px;">35K</div>
<div class="t" style="top:836.80px;font-size:14.0px;line-height:14.0px;color:#8a8a8a;font-weight:400;left:865.00px;">35K</div>
<div class="t" style="top:890.70px;font-size:14.0px;line-height:14.0px;color:#8a8a8a;font-weight:400;left:301.80px;">15K</div>
<div class="t" style="top:890.70px;font-size:14.0px;line-height:14.0px;color:#8a8a8a;font-weight:400;left:865.00px;">15K</div>
<div class="t" style="top:944.70px;font-size:14.0px;line-height:14.0px;color:#8a8a8a;font-weight:400;left:301.80px;">05K</div>
<div class="t" style="top:944.70px;font-size:14.0px;line-height:14.0px;color:#8a8a8a;font-weight:400;left:865.00px;">05K</div>
<div class="t" style="top:998.60px;font-size:14.0px;line-height:14.0px;color:#8a8a8a;font-weight:400;left:301.80px;">0K</div>
<div class="t" style="top:998.60px;font-size:14.0px;line-height:14.0px;color:#8a8a8a;font-weight:400;left:865.00px;">0K</div>
<svg style="left:0;top:0" width="1440" height="1024" viewBox="0 0 1440 1024">
<defs><linearGradient id="og" x1="0" y1="0" x2="0" y2="1"><stop offset="0" stop-color="#fbd6a0"/><stop offset="1" stop-color="#fffaf2"/></linearGradient><linearGradient id="bg" x1="0" y1="0" x2="0" y2="1"><stop offset="0" stop-color="#b0b8fa"/><stop offset="1" stop-color="#f1f4ff"/></linearGradient></defs>
<path d="M345 789.3H821.6" stroke="#dcdcdc" stroke-width="1" stroke-dasharray="4 3"/><path d="M345 843.4H821.6" stroke="#dcdcdc" stroke-width="1" stroke-dasharray="4 3"/><path d="M345 897.3H821.6" stroke="#dcdcdc" stroke-width="1" stroke-dasharray="4 3"/><path d="M345 951.3H821.6" stroke="#dcdcdc" stroke-width="1" stroke-dasharray="4 3"/><path d="M424 789.3V1005" stroke="#dcdcdc" stroke-width="1" stroke-dasharray="4 3"/><path d="M503.3 789.3V1005" stroke="#dcdcdc" stroke-width="1" stroke-dasharray="4 3"/><path d="M582.6 789.3V1005" stroke="#dcdcdc" stroke-width="1" stroke-dasharray="4 3"/><path d="M662 789.3V1005" stroke="#dcdcdc" stroke-width="1" stroke-dasharray="4 3"/><path d="M741.5 789.3V1005" stroke="#dcdcdc" stroke-width="1" stroke-dasharray="4 3"/><path d="M821.6 789.3V1005" stroke="#dcdcdc" stroke-width="1" stroke-dasharray="4 3"/><path d="M398.4 1004.5V882.2Q398.4 878.2 402.4 878.2H418.0Q422.0 878.2 422.0 882.2V1004.5Z" fill="url(#og)"/><path d="M426.4 1004.5V824.1Q426.4 820.1 430.4 820.1H446.0Q450.0 820.1 450.0 824.1V1004.5Z" fill="url(#bg)"/><path d="M477.7 1004.5V862.8Q477.7 858.8 481.7 858.8H497.3Q501.3 858.8 501.3 862.8V1004.5Z" fill="url(#og)"/><path d="M505.7 1004.5V898.0Q505.7 894.0 509.7 894.0H525.3Q529.3 894.0 529.3 898.0V1004.5Z" fill="url(#bg)"/><path d="M557.0 1004.5V907.3Q557.0 903.3 561.0 903.3H576.6Q580.6 903.3 580.6 907.3V1004.5Z" fill="url(#og)"/><path d="M585.0 1004.5V862.9Q585.0 858.9 589.0 858.9H604.6Q608.6 858.9 608.6 862.9V1004.5Z" fill="url(#bg)"/><path d="M636.4 1004.5V938.0Q636.4 934.0 640.4 934.0H656.0Q660.0 934.0 660.0 938.0V1004.5Z" fill="url(#og)"/><path d="M664.4 1004.5V907.1Q664.4 903.1 668.4 903.1H684.0Q688.0 903.1 688.0 907.1V1004.5Z" fill="url(#bg)"/><path d="M715.9 1004.5V843.0Q715.9 839.0 719.9 839.0H735.5Q739.5 839.0 739.5 843.0V1004.5Z" fill="url(#og)"/><path d="M743.9 1004.5V902.1Q743.9 898.1 747.9 898.1H763.5Q767.5 898.1 767.5 902.1V1004.5Z" fill="url(#bg)"/><path d="M344.6 789V1005.2H821.6" fill="none" stroke="#8a8a8a" stroke-width="1.2"/><path d="M424 1005V1013.8" stroke="#8a8a8a" stroke-width="1.2"/><path d="M503.3 1005V1013.8" stroke="#8a8a8a" stroke-width="1.2"/><path d="M582.6 1005V1013.8" stroke="#8a8a8a" stroke-width="1.2"/><path d="M662 1005V1013.8" stroke="#8a8a8a" stroke-width="1.2"/><path d="M741.5 1005V1013.8" stroke="#8a8a8a" stroke-width="1.2"/><path d="M908 789H1383.5" stroke="#dcdcdc" stroke-width="1" stroke-dasharray="4 3"/><path d="M908 843.2H1383.5" stroke="#dcdcdc" stroke-width="1" stroke-dasharray="4 3"/><path d="M908 897.3H1383.5" stroke="#dcdcdc" stroke-width="1" stroke-dasharray="4 3"/><path d="M908 951.3H1383.5" stroke="#dcdcdc" stroke-width="1" stroke-dasharray="4 3"/><path d="M999.4 789V1005" stroke="#dcdcdc" stroke-width="1" stroke-dasharray="4 3"/><path d="M1091.6 789V1005" stroke="#dcdcdc" stroke-width="1" stroke-dasharray="4 3"/><path d="M1184.1 789V1005" stroke="#dcdcdc" stroke-width="1" stroke-dasharray="4 3"/><path d="M1276.4 789V1005" stroke="#dcdcdc" stroke-width="1" stroke-dasharray="4 3"/><path d="M1368.5 789V1005" stroke="#dcdcdc" stroke-width="1" stroke-dasharray="4 3"/><path d="M907.3 789V1005.3H1383.5" fill="none" stroke="#8a8a8a" stroke-width="1.2"/><path d="M907.3 1005V1014" stroke="#8a8a8a" stroke-width="1.2"/><path d="M999.4 1005V1014" stroke="#8a8a8a" stroke-width="1.2"/><path d="M1091.6 1005V1014" stroke="#8a8a8a" stroke-width="1.2"/><path d="M1184.1 1005V1014" stroke="#8a8a8a" stroke-width="1.2"/><path d="M1276.4 1005V1014" stroke="#8a8a8a" stroke-width="1.2"/><path d="M1368.5 1005V1014" stroke="#8a8a8a" stroke-width="1.2"/><path d="M907.30 807.00 C938.00 811.55 968.70 816.10 999.40 816.10 C1030.13 816.10 1060.87 808.00 1091.60 808.00 C1122.43 808.00 1153.27 808.00 1184.10 808.00 C1214.87 808.00 1245.63 809.20 1276.40 809.20 C1307.10 809.20 1337.80 809.20 1368.50 809.20" fill="none" stroke="#f4a93c" stroke-width="1.3"/><circle cx="907.3" cy="807" r="3.6" fill="#fff" stroke="#f4a93c" stroke-width="1.3"/><circle cx="999.4" cy="816.1" r="3.6" fill="#fff" stroke="#f4a93c" stroke-width="1.3"/><circle cx="1091.6" cy="808" r="3.6" fill="#fff" stroke="#f4a93c" stroke-width="1.3"/><circle cx="1184.1" cy="808" r="3.6" fill="#fff" stroke="#f4a93c" stroke-width="1.3"/><circle cx="1276.4" cy="809.2" r="3.6" fill="#fff" stroke="#f4a93c" stroke-width="1.3"/><circle cx="1368.5" cy="809.2" r="3.6" fill="#fff" stroke="#f4a93c" stroke-width="1.3"/><path d="M907.30 841.80 C938.00 835.25 968.70 828.70 999.40 828.70 C1030.13 828.70 1060.87 851.70 1091.60 851.70 C1122.43 851.70 1153.27 819.10 1184.10 819.10 C1214.87 819.10 1245.63 842.14 1276.40 850.80 C1307.10 859.44 1337.80 865.22 1368.50 871.00" fill="none" stroke="#5a74f2" stroke-width="1.3"/><circle cx="907.3" cy="841.8" r="3.6" fill="#fff" stroke="#4a7cf0" stroke-width="1.3"/><circle cx="999.4" cy="828.7" r="3.6" fill="#fff" stroke="#4a7cf0" stroke-width="1.3"/><circle cx="1091.6" cy="851.7" r="3.6" fill="#fff" stroke="#4a7cf0" stroke-width="1.3"/><circle cx="1184.1" cy="819.1" r="3.6" fill="#fff" stroke="#4a7cf0" stroke-width="1.3"/><circle cx="1276.4" cy="850.8" r="3.6" fill="#fff" stroke="#4a7cf0" stroke-width="1.3"/><circle cx="1368.5" cy="871" r="3.6" fill="#fff" stroke="#4a7cf0" stroke-width="1.3"/><path d="M907.30 974.50 C938.00 981.30 968.70 988.10 999.40 988.10 C1030.13 988.10 1060.87 964.60 1091.60 964.60 C1120.90 964.60 1150.20 997.80 1179.50 997.80 C1211.80 997.80 1244.10 974.86 1276.40 966.10 C1307.10 957.77 1337.80 951.89 1368.50 946.00" fill="none" stroke="#3bb54a" stroke-width="1.3"/><circle cx="907.3" cy="974.5" r="3.6" fill="#fff" stroke="#3bb54a" stroke-width="1.3"/><circle cx="999.4" cy="988.1" r="3.6" fill="#fff" stroke="#3bb54a" stroke-width="1.3"/><circle cx="1091.6" cy="964.6" r="3.6" fill="#fff" stroke="#3bb54a" stroke-width="1.3"/><circle cx="1276.4" cy="966.1" r="3.6" fill="#fff" stroke="#3bb54a" stroke-width="1.3"/><circle cx="1368.5" cy="946" r="3.6" fill="#fff" stroke="#3bb54a" stroke-width="1.3"/></svg>

</body></html>
